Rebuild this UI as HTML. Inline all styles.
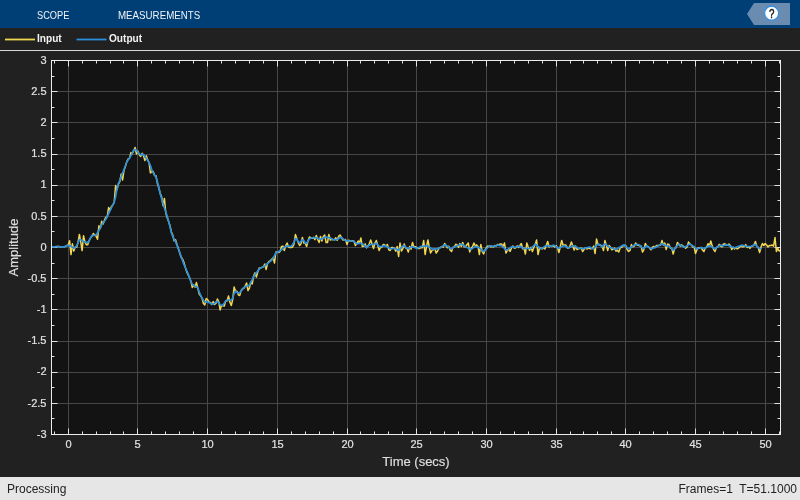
<!DOCTYPE html>
<html><head><meta charset="utf-8"><style>
html,body{margin:0;padding:0;width:800px;height:500px;overflow:hidden;background:#212121;font-family:"Liberation Sans",sans-serif}
.hdr{position:absolute;left:0;top:0;width:800px;height:28px;background:#003f76;will-change:transform}
.tab{position:absolute;top:9px;color:#f0f4f8;font-size:10.5px;transform-origin:0 0}
.leg{position:absolute;left:0;top:28px;width:800px;height:22px;will-change:transform;background:#212121;border-bottom:1.5px solid #d8d8d8}
.ll{position:absolute;top:10px;height:2px}
.lt{position:absolute;top:4px;color:#f2f2f2;font-size:11px;font-weight:bold;transform:scaleX(0.92);transform-origin:0 0}
.status{position:absolute;left:0;top:477px;width:800px;height:23px;background:#e6e6e6;color:#222;will-change:transform}
</style></head><body>
<div class="hdr">
 <div class="tab" style="left:37px;transform:scaleX(0.88)">SCOPE</div>
 <div class="tab" style="left:118px;transform:scaleX(0.927)">MEASUREMENTS</div>
 <svg style="position:absolute;left:0;top:0" width="800" height="28">
  <path d="M747 14L754 3H790V25H754Z" fill="#6a8cb0"/>
  <circle cx="771.6" cy="13.2" r="7" fill="#fff" stroke="#2f8ee0" stroke-width="1.2"/>
  <text transform="translate(771.8 17.6) scale(0.78 1)" text-anchor="middle" font-family="Liberation Sans" font-size="12.5" fill="#111" stroke="#111" stroke-width="0.45">?</text>
 </svg>
</div>
<div class="leg">
 <svg style="position:absolute;left:0;top:0" width="200" height="22"><path d="M5 11.5H35" stroke="#f0d653" stroke-width="1.8"/><path d="M76.5 11.5H106.5" stroke="#2b8fdc" stroke-width="1.8"/></svg>
 <div class="lt" style="left:37px">Input</div>
 <div class="lt" style="left:109px">Output</div>
</div>
<svg style="position:absolute;left:0;top:0;will-change:transform" width="800" height="476">
<defs><clipPath id="clip"><rect x="51.5" y="60.5" width="729.0" height="374.0"/></clipPath></defs><rect x="51.5" y="60.5" width="729.0" height="374.0" fill="#131313"/>
<path d="M68.5 60.5V434.5M137.5 60.5V434.5M207.5 60.5V434.5M277.5 60.5V434.5M347.5 60.5V434.5M416.5 60.5V434.5M486.5 60.5V434.5M556.5 60.5V434.5M625.5 60.5V434.5M695.5 60.5V434.5M765.5 60.5V434.5M51.5 403.5H780.5M51.5 372.5H780.5M51.5 341.5H780.5M51.5 309.5H780.5M51.5 278.5H780.5M51.5 247.5H780.5M51.5 216.5H780.5M51.5 185.5H780.5M51.5 154.5H780.5M51.5 122.5H780.5M51.5 91.5H780.5" stroke="#474747" stroke-width="1" fill="none"/>
<path d="M54.5 60.5v3M54.5 434.5v-3M68.5 60.5v6M68.5 434.5v-6M82.5 60.5v3M82.5 434.5v-3M96.5 60.5v3M96.5 434.5v-3M110.5 60.5v3M110.5 434.5v-3M123.5 60.5v3M123.5 434.5v-3M137.5 60.5v6M137.5 434.5v-6M151.5 60.5v3M151.5 434.5v-3M165.5 60.5v3M165.5 434.5v-3M179.5 60.5v3M179.5 434.5v-3M193.5 60.5v3M193.5 434.5v-3M207.5 60.5v6M207.5 434.5v-6M221.5 60.5v3M221.5 434.5v-3M235.5 60.5v3M235.5 434.5v-3M249.5 60.5v3M249.5 434.5v-3M263.5 60.5v3M263.5 434.5v-3M277.5 60.5v6M277.5 434.5v-6M291.5 60.5v3M291.5 434.5v-3M305.5 60.5v3M305.5 434.5v-3M319.5 60.5v3M319.5 434.5v-3M333.5 60.5v3M333.5 434.5v-3M347.5 60.5v6M347.5 434.5v-6M360.5 60.5v3M360.5 434.5v-3M374.5 60.5v3M374.5 434.5v-3M388.5 60.5v3M388.5 434.5v-3M402.5 60.5v3M402.5 434.5v-3M416.5 60.5v6M416.5 434.5v-6M430.5 60.5v3M430.5 434.5v-3M444.5 60.5v3M444.5 434.5v-3M458.5 60.5v3M458.5 434.5v-3M472.5 60.5v3M472.5 434.5v-3M486.5 60.5v6M486.5 434.5v-6M500.5 60.5v3M500.5 434.5v-3M514.5 60.5v3M514.5 434.5v-3M528.5 60.5v3M528.5 434.5v-3M542.5 60.5v3M542.5 434.5v-3M556.5 60.5v6M556.5 434.5v-6M570.5 60.5v3M570.5 434.5v-3M583.5 60.5v3M583.5 434.5v-3M597.5 60.5v3M597.5 434.5v-3M611.5 60.5v3M611.5 434.5v-3M625.5 60.5v6M625.5 434.5v-6M639.5 60.5v3M639.5 434.5v-3M653.5 60.5v3M653.5 434.5v-3M667.5 60.5v3M667.5 434.5v-3M681.5 60.5v3M681.5 434.5v-3M695.5 60.5v6M695.5 434.5v-6M709.5 60.5v3M709.5 434.5v-3M723.5 60.5v3M723.5 434.5v-3M737.5 60.5v3M737.5 434.5v-3M751.5 60.5v3M751.5 434.5v-3M765.5 60.5v6M765.5 434.5v-6M779.5 60.5v3M779.5 434.5v-3M51.5 418.5h3M780.5 418.5h-3M51.5 403.5h6M780.5 403.5h-6M51.5 387.5h3M780.5 387.5h-3M51.5 372.5h6M780.5 372.5h-6M51.5 356.5h3M780.5 356.5h-3M51.5 341.5h6M780.5 341.5h-6M51.5 325.5h3M780.5 325.5h-3M51.5 309.5h6M780.5 309.5h-6M51.5 294.5h3M780.5 294.5h-3M51.5 278.5h6M780.5 278.5h-6M51.5 263.5h3M780.5 263.5h-3M51.5 247.5h6M780.5 247.5h-6M51.5 231.5h3M780.5 231.5h-3M51.5 216.5h6M780.5 216.5h-6M51.5 200.5h3M780.5 200.5h-3M51.5 185.5h6M780.5 185.5h-6M51.5 169.5h3M780.5 169.5h-3M51.5 154.5h6M780.5 154.5h-6M51.5 138.5h3M780.5 138.5h-3M51.5 122.5h6M780.5 122.5h-6M51.5 107.5h3M780.5 107.5h-3M51.5 91.5h6M780.5 91.5h-6M51.5 76.5h3M780.5 76.5h-3" stroke="#e0e0e0" stroke-width="1" fill="none"/>
<g clip-path="url(#clip)" fill="none" stroke-linejoin="round" stroke-linecap="round"><path d="M51.5 247.0 52.9 246.9 54.3 246.8 55.7 246.7 57.0 246.6 58.4 246.5 59.8 246.7 61.2 246.9 62.6 247.2 64.0 247.1 65.4 246.3 66.8 245.6 68.2 245.0 69.6 240.7 71.0 254.6 72.4 243.8 73.8 251.0 75.2 246.9 76.6 247.2 78.0 242.6 79.4 234.4 80.7 241.5 82.1 250.6 83.5 235.7 84.9 241.9 86.3 244.7 87.7 244.8 89.1 240.6 90.5 237.8 91.9 236.5 93.3 233.5 94.7 234.9 96.1 236.1 97.5 239.3 98.9 225.8 100.3 228.5 101.7 221.3 103.1 224.0 104.4 220.4 105.8 217.3 107.2 216.9 108.6 207.5 110.0 210.3 111.4 206.5 112.8 205.0 114.2 202.4 115.6 185.5 117.0 189.6 118.4 184.0 119.8 181.6 121.2 174.0 122.6 180.0 124.0 170.2 125.4 166.5 126.7 161.9 128.1 159.0 129.5 158.4 130.9 152.6 132.3 153.7 133.7 150.7 135.1 147.5 136.5 154.0 137.9 151.2 139.3 154.7 140.7 156.5 142.1 153.3 143.5 155.5 144.9 160.5 146.3 155.8 147.7 159.9 149.1 163.0 150.4 173.0 151.8 171.8 153.2 171.6 154.6 175.5 156.0 175.8 157.4 183.4 158.8 187.6 160.2 193.2 161.6 196.7 163.0 205.6 164.4 198.4 165.8 213.0 167.2 217.7 168.6 221.6 170.0 225.7 171.4 232.0 172.8 235.4 174.1 240.7 175.5 239.7 176.9 244.3 178.3 248.3 179.7 252.8 181.1 257.2 182.5 259.0 183.9 262.3 185.3 267.4 186.7 271.9 188.1 274.7 189.5 277.7 190.9 281.2 192.3 287.5 193.7 285.0 195.1 287.2 196.4 282.5 197.8 288.1 199.2 294.0 200.6 295.8 202.0 298.1 203.4 303.5 204.8 305.0 206.2 298.5 207.6 299.5 209.0 302.1 210.4 302.5 211.8 304.5 213.2 301.6 214.6 304.5 216.0 303.2 217.4 299.0 218.8 301.8 220.1 310.0 221.5 305.4 222.9 305.8 224.3 306.0 225.7 300.9 227.1 300.9 228.5 296.0 229.9 302.1 231.3 305.5 232.7 299.6 234.1 287.0 235.5 291.1 236.9 291.2 238.3 294.8 239.7 295.5 241.1 290.6 242.5 288.6 243.8 288.4 245.2 285.8 246.6 283.0 248.0 290.5 249.4 288.1 250.8 282.1 252.2 284.0 253.6 276.0 255.0 272.9 256.4 277.0 257.8 271.9 259.2 268.0 260.6 268.2 262.0 267.4 263.4 266.9 264.8 264.0 266.1 269.5 267.5 263.6 268.9 261.5 270.3 260.8 271.7 259.2 273.1 257.8 274.5 263.0 275.9 252.0 277.3 251.9 278.7 252.6 280.1 251.5 281.5 246.5 282.9 246.1 284.3 250.5 285.7 245.8 287.1 243.0 288.5 247.1 289.8 247.6 291.2 247.5 292.6 247.0 294.0 244.1 295.4 234.5 296.8 238.6 298.2 242.7 299.6 245.5 301.0 243.8 302.4 237.5 303.8 243.1 305.2 243.0 306.6 246.5 308.0 241.1 309.4 237.0 310.8 237.6 312.2 238.3 313.5 237.5 314.9 239.7 316.3 235.5 317.7 239.5 319.1 242.5 320.5 236.5 321.9 241.0 323.3 236.6 324.7 235.0 326.1 242.5 327.5 242.5 328.9 234.5 330.3 240.1 331.7 239.2 333.1 239.8 334.5 239.6 335.8 237.8 337.2 240.3 338.6 236.4 340.0 235.0 341.4 237.4 342.8 239.9 344.2 239.7 345.6 239.6 347.0 244.5 348.4 240.3 349.8 240.8 351.2 241.1 352.6 240.8 354.0 241.2 355.4 245.5 356.8 243.6 358.2 241.0 359.5 243.0 360.9 238.0 362.3 246.5 363.7 246.3 365.1 243.8 366.5 247.7 367.9 246.1 369.3 243.8 370.7 240.0 372.1 243.9 373.5 248.5 374.9 243.2 376.3 240.5 377.7 245.0 379.1 250.5 380.5 247.5 381.9 247.2 383.2 244.6 384.6 244.8 386.0 246.0 387.4 244.5 388.8 249.8 390.2 250.5 391.6 247.6 393.0 247.6 394.4 248.1 395.8 251.3 397.2 246.5 398.6 256.5 400.0 243.0 401.4 251.0 402.8 248.9 404.2 244.0 405.5 247.7 406.9 248.3 408.3 252.0 409.7 246.5 411.1 249.2 412.5 242.5 413.9 247.3 415.3 246.7 416.7 247.5 418.1 248.6 419.5 248.4 420.9 247.5 422.3 247.7 423.7 240.5 425.1 254.5 426.5 246.6 427.9 240.0 429.2 246.9 430.6 253.0 432.0 250.4 433.4 249.7 434.8 248.8 436.2 253.0 437.6 251.0 439.0 248.2 440.4 247.5 441.8 246.5 443.2 247.2 444.6 243.5 446.0 245.7 447.4 247.7 448.8 246.3 450.2 250.2 451.6 251.5 452.9 247.2 454.3 247.2 455.7 244.3 457.1 244.9 458.5 247.4 459.9 243.6 461.3 246.4 462.7 242.5 464.1 246.8 465.5 246.7 466.9 244.8 468.3 243.0 469.7 252.0 471.1 248.1 472.5 246.8 473.9 243.0 475.2 245.8 476.6 244.9 478.0 246.4 479.4 254.5 480.8 244.5 482.2 251.5 483.6 254.0 485.0 250.1 486.4 247.5 487.8 246.0 489.2 246.2 490.6 246.7 492.0 246.4 493.4 247.1 494.8 245.5 496.2 246.0 497.6 244.6 498.9 244.8 500.3 244.0 501.7 244.0 503.1 246.5 504.5 243.0 505.9 253.0 507.3 250.7 508.7 248.8 510.1 251.4 511.5 248.0 512.9 246.0 514.3 248.2 515.7 247.7 517.1 245.9 518.5 247.5 519.9 245.5 521.3 243.5 522.6 248.8 524.0 247.8 525.4 254.0 526.8 243.0 528.2 247.1 529.6 250.4 531.0 247.2 532.4 251.5 533.8 247.4 535.2 244.4 536.6 240.0 538.0 254.5 539.4 248.5 540.8 247.8 542.2 248.9 543.6 247.9 544.9 249.0 546.3 245.2 547.7 241.5 549.1 247.0 550.5 245.9 551.9 246.4 553.3 245.5 554.7 247.0 556.1 245.8 557.5 247.6 558.9 252.5 560.3 246.5 561.7 240.5 563.1 245.2 564.5 244.9 565.9 245.1 567.3 248.0 568.6 248.1 570.0 245.8 571.4 242.0 572.8 246.1 574.2 250.0 575.6 245.9 577.0 249.5 578.4 248.7 579.8 248.4 581.2 247.9 582.6 251.5 584.0 249.5 585.4 247.8 586.8 249.0 588.2 248.1 589.6 248.6 591.0 248.8 592.3 248.5 593.7 246.0 595.1 253.5 596.5 239.0 597.9 244.3 599.3 245.0 600.7 245.1 602.1 246.4 603.5 250.5 604.9 240.5 606.3 245.1 607.7 250.5 609.1 245.4 610.5 247.3 611.9 249.8 613.3 249.1 614.6 248.1 616.0 251.2 617.4 250.3 618.8 252.0 620.2 247.8 621.6 247.4 623.0 245.8 624.4 245.8 625.8 245.4 627.2 249.5 628.6 251.5 630.0 250.4 631.4 244.6 632.8 246.9 634.2 246.3 635.6 243.0 637.0 245.0 638.3 245.4 639.7 245.9 641.1 246.0 642.5 252.0 643.9 249.7 645.3 243.5 646.7 245.8 648.1 246.7 649.5 247.8 650.9 249.8 652.3 247.4 653.7 246.4 655.1 247.5 656.5 245.4 657.9 245.4 659.3 245.4 660.7 245.1 662.0 240.5 663.4 245.1 664.8 243.0 666.2 249.5 667.6 244.1 669.0 244.5 670.4 248.2 671.8 248.3 673.2 254.0 674.6 248.5 676.0 247.8 677.4 242.5 678.8 244.1 680.2 246.2 681.6 244.9 683.0 246.0 684.3 246.8 685.7 248.1 687.1 247.0 688.5 242.0 689.9 244.0 691.3 244.8 692.7 247.0 694.1 246.5 695.5 253.5 696.9 249.8 698.3 247.7 699.7 247.9 701.1 247.4 702.5 250.1 703.9 251.6 705.3 247.8 706.7 247.2 708.0 243.7 709.4 246.0 710.8 241.0 712.2 245.9 713.6 249.3 715.0 251.5 716.4 247.5 717.8 247.0 719.2 244.4 720.6 246.1 722.0 246.9 723.4 244.2 724.8 243.6 726.2 245.4 727.6 244.9 729.0 244.1 730.4 245.8 731.7 249.5 733.1 247.2 734.5 249.0 735.9 247.9 737.3 249.0 738.7 248.0 740.1 246.6 741.5 246.5 742.9 246.9 744.3 246.5 745.7 244.6 747.1 247.5 748.5 246.6 749.9 248.4 751.3 246.4 752.7 246.1 754.0 245.0 755.4 241.5 756.8 246.3 758.2 247.3 759.6 252.5 761.0 247.0 762.4 243.5 763.8 245.5 765.2 243.5 766.6 245.0 768.0 247.0 769.4 245.5 770.8 245.5 772.2 245.0 773.6 246.1 775.0 237.5 776.4 251.5 777.7 248.2 779.1 251.0 780.5 250.5" stroke="#f0d653" stroke-width="1.5"/><path d="M51.5 247.0 52.9 246.9 54.3 246.8 55.7 246.7 57.0 246.6 58.4 246.5 59.8 246.7 61.2 246.9 62.6 247.2 64.0 247.1 65.4 246.3 66.8 245.6 68.2 245.4 69.6 245.7 71.0 246.2 72.4 247.2 73.8 248.2 75.2 247.2 76.6 246.0 78.0 242.9 79.4 239.7 80.7 239.6 82.1 240.6 83.5 241.5 84.9 242.1 86.3 242.3 87.7 242.4 89.1 240.9 90.5 238.1 91.9 235.3 93.3 235.3 94.7 235.3 96.1 235.0 97.5 232.8 98.9 230.5 100.3 227.6 101.7 224.7 103.1 222.8 104.4 221.2 105.8 219.3 107.2 216.5 108.6 213.7 110.0 210.8 111.4 207.8 112.8 204.9 114.2 202.4 115.6 196.8 117.0 188.7 118.4 183.8 119.8 180.3 121.2 176.7 122.6 173.1 124.0 169.5 125.4 165.8 126.7 162.2 128.1 160.0 129.5 158.1 130.9 155.6 132.3 152.9 133.7 150.1 135.1 149.5 136.5 150.3 137.9 152.4 139.3 153.8 140.7 154.9 142.1 154.4 143.5 154.6 144.9 156.5 146.3 158.4 147.7 160.5 149.1 162.6 150.4 165.4 151.8 169.9 153.2 173.0 154.6 175.0 156.0 177.1 157.4 181.7 158.8 187.7 160.2 193.7 161.6 198.8 163.0 203.5 164.4 208.0 165.8 212.1 167.2 216.3 168.6 221.2 170.0 226.5 171.4 233.0 172.8 236.4 174.1 239.1 175.5 241.5 176.9 245.1 178.3 248.7 179.7 252.6 181.1 256.5 182.5 260.5 183.9 264.4 185.3 267.4 186.7 270.5 188.1 273.8 189.5 277.4 190.9 281.6 192.3 284.1 193.7 285.3 195.1 286.2 196.4 286.6 197.8 288.0 199.2 291.9 200.6 295.2 202.0 297.8 203.4 300.4 204.8 301.6 206.2 301.8 207.6 302.0 209.0 302.5 210.4 303.2 211.8 303.9 213.2 304.3 214.6 303.1 216.0 301.9 217.4 301.4 218.8 303.0 220.1 304.5 221.5 305.4 222.9 305.0 224.3 303.1 225.7 301.1 227.1 300.0 228.5 300.0 229.9 300.0 231.3 300.0 232.7 297.9 234.1 293.7 235.5 291.3 236.9 292.2 238.3 293.0 239.7 292.7 241.1 290.9 242.5 289.2 243.8 287.8 245.2 286.6 246.6 286.0 248.0 286.0 249.4 285.2 250.8 282.4 252.2 279.6 253.6 276.8 255.0 274.5 256.4 272.7 257.8 270.9 259.2 269.1 260.6 267.8 262.0 267.3 263.4 266.7 264.8 265.9 266.1 264.7 267.5 263.5 268.9 262.4 270.3 261.4 271.7 260.2 273.1 258.2 274.5 255.8 275.9 252.7 277.3 252.1 278.7 251.6 280.1 250.8 281.5 249.8 282.9 248.6 284.3 247.2 285.7 246.4 287.1 246.2 288.5 246.1 289.8 246.3 291.2 246.2 292.6 244.5 294.0 242.1 295.4 238.5 296.8 238.8 298.2 241.8 299.6 242.8 301.0 241.3 302.4 239.7 303.8 240.4 305.2 243.0 306.6 243.4 308.0 240.9 309.4 238.9 310.8 238.3 312.2 237.8 313.5 237.6 314.9 237.7 316.3 237.9 317.7 238.3 319.1 238.8 320.5 239.3 321.9 238.9 323.3 238.1 324.7 237.2 326.1 237.1 327.5 237.3 328.9 237.5 330.3 238.1 331.7 238.8 333.1 239.5 334.5 239.9 335.8 239.7 337.2 239.3 338.6 238.5 340.0 237.6 341.4 237.4 342.8 238.6 344.2 239.8 345.6 240.6 347.0 240.8 348.4 240.9 349.8 241.0 351.2 241.0 352.6 241.0 354.0 241.4 355.4 242.6 356.8 243.8 358.2 243.6 359.5 243.2 360.9 243.3 362.3 243.8 363.7 244.7 365.1 246.1 366.5 247.5 367.9 246.3 369.3 245.1 370.7 244.5 372.1 244.5 373.5 244.3 374.9 243.6 376.3 243.3 377.7 244.9 379.1 246.5 380.5 246.7 381.9 246.4 383.2 246.0 384.6 245.6 386.0 246.1 387.4 246.9 388.8 247.7 390.2 248.5 391.6 248.8 393.0 248.5 394.4 248.2 395.8 248.6 397.2 249.6 398.6 250.4 400.0 248.8 401.4 247.2 402.8 246.1 404.2 245.6 405.5 246.9 406.9 248.1 408.3 248.8 409.7 247.9 411.1 247.0 412.5 246.7 413.9 247.3 415.3 247.8 416.7 248.4 418.1 248.0 419.5 247.3 420.9 246.6 422.3 246.3 423.7 246.1 425.1 245.8 426.5 245.6 427.9 246.1 429.2 247.0 430.6 247.9 432.0 248.9 433.4 249.4 434.8 249.2 436.2 249.0 437.6 248.7 439.0 248.5 440.4 247.6 441.8 246.6 443.2 245.7 444.6 244.8 446.0 245.2 447.4 246.3 448.8 247.3 450.2 248.4 451.6 248.7 452.9 247.8 454.3 247.0 455.7 246.2 457.1 245.6 458.5 245.2 459.9 244.7 461.3 244.2 462.7 244.5 464.1 245.6 465.5 246.6 466.9 247.4 468.3 248.1 469.7 248.8 471.1 249.5 472.5 248.4 473.9 247.4 475.2 246.6 476.6 246.9 478.0 247.3 479.4 247.9 480.8 249.1 482.2 250.4 483.6 251.4 485.0 250.1 486.4 248.8 487.8 247.5 489.2 246.2 490.6 245.7 492.0 246.1 493.4 246.5 494.8 246.1 496.2 245.6 497.6 245.1 498.9 245.2 500.3 245.6 501.7 245.9 503.1 247.1 504.5 248.5 505.9 249.9 507.3 249.9 508.7 248.9 510.1 247.9 511.5 246.9 512.9 246.8 514.3 247.3 515.7 247.2 517.1 246.7 518.5 246.2 519.9 246.4 521.3 247.1 522.6 247.8 524.0 248.5 525.4 248.5 526.8 248.5 528.2 248.5 529.6 248.5 531.0 248.5 532.4 247.1 533.8 245.7 535.2 244.3 536.6 245.0 538.0 246.3 539.4 247.5 540.8 248.8 542.2 248.2 543.6 247.2 544.9 246.2 546.3 245.6 547.7 245.8 549.1 246.1 550.5 246.4 551.9 246.0 553.3 245.3 554.7 245.5 556.1 246.6 557.5 247.7 558.9 248.3 560.3 247.5 561.7 246.8 563.1 246.0 564.5 245.8 565.9 246.5 567.3 247.3 568.6 247.9 570.0 247.2 571.4 246.5 572.8 245.8 574.2 245.9 575.6 246.7 577.0 247.4 578.4 248.2 579.8 248.5 581.2 248.5 582.6 248.5 584.0 248.5 585.4 248.1 586.8 247.7 588.2 247.4 589.6 247.0 591.0 247.8 592.3 248.6 593.7 248.3 595.1 246.9 596.5 245.5 597.9 244.1 599.3 244.3 600.7 245.7 602.1 246.9 603.5 244.9 604.9 243.8 606.3 244.9 607.7 246.0 609.1 247.0 610.5 247.5 611.9 248.0 613.3 248.5 614.6 249.0 616.0 249.5 617.4 248.6 618.8 247.7 620.2 246.9 621.6 246.0 623.0 245.1 624.4 244.9 625.8 246.3 627.2 247.7 628.6 248.9 630.0 248.0 631.4 247.0 632.8 246.0 634.2 245.1 635.6 244.5 637.0 244.5 638.3 244.5 639.7 245.2 641.1 246.6 642.5 248.0 643.9 248.5 645.3 246.9 646.7 245.6 648.1 246.6 649.5 247.6 650.9 248.6 652.3 248.6 653.7 248.0 655.1 247.4 656.5 246.7 657.9 246.1 659.3 245.3 660.7 244.5 662.0 243.8 663.4 244.2 664.8 245.2 666.2 246.0 667.6 246.0 669.0 246.0 670.4 247.4 671.8 248.8 673.2 250.2 674.6 249.1 676.0 247.3 677.4 245.5 678.8 244.2 680.2 245.0 681.6 245.8 683.0 246.6 684.3 247.4 685.7 246.7 687.1 245.8 688.5 244.9 689.9 244.0 691.3 244.9 692.7 245.9 694.1 246.9 695.5 247.9 696.9 248.9 698.3 248.5 699.7 248.0 701.1 247.5 702.5 248.0 703.9 248.5 705.3 247.9 706.7 247.2 708.0 246.5 709.4 245.8 710.8 246.1 712.2 247.2 713.6 248.3 715.0 248.7 716.4 247.7 717.8 246.8 719.2 245.9 720.6 245.0 722.0 245.6 723.4 245.8 724.8 245.2 726.2 244.6 727.6 245.0 729.0 245.6 730.4 246.2 731.7 246.8 733.1 247.4 734.5 248.0 735.9 247.4 737.3 246.9 738.7 246.3 740.1 245.8 741.5 245.2 742.9 245.3 744.3 245.7 745.7 246.1 747.1 246.5 748.5 246.5 749.9 246.5 751.3 246.3 752.7 245.5 754.0 244.6 755.4 244.5 756.8 246.1 758.2 247.6 759.6 248.5 761.0 248.5" stroke="#2b8fdc" stroke-width="1.7"/></g>
<rect x="51.5" y="60.5" width="729.0" height="374.0" fill="none" stroke="#ececec" stroke-width="1"/>
<g font-family="Liberation Sans" font-size="11" fill="#e2e2e2" stroke="#e2e2e2" stroke-width="0.2"><text x="68.6" y="448" text-anchor="middle">0</text><text x="137.6" y="448" text-anchor="middle">5</text><text x="207.6" y="448" text-anchor="middle">10</text><text x="277.6" y="448" text-anchor="middle">15</text><text x="347.6" y="448" text-anchor="middle">20</text><text x="416.6" y="448" text-anchor="middle">25</text><text x="486.6" y="448" text-anchor="middle">30</text><text x="556.6" y="448" text-anchor="middle">35</text><text x="625.6" y="448" text-anchor="middle">40</text><text x="695.6" y="448" text-anchor="middle">45</text><text x="765.6" y="448" text-anchor="middle">50</text><text x="46.5" y="437.7" text-anchor="end">-3</text><text x="46.5" y="406.5" text-anchor="end">-2.5</text><text x="46.5" y="375.4" text-anchor="end">-2</text><text x="46.5" y="344.2" text-anchor="end">-1.5</text><text x="46.5" y="313.0" text-anchor="end">-1</text><text x="46.5" y="281.9" text-anchor="end">-0.5</text><text x="46.5" y="250.7" text-anchor="end">0</text><text x="46.5" y="219.5" text-anchor="end">0.5</text><text x="46.5" y="188.4" text-anchor="end">1</text><text x="46.5" y="157.2" text-anchor="end">1.5</text><text x="46.5" y="126.0" text-anchor="end">2</text><text x="46.5" y="94.9" text-anchor="end">2.5</text><text x="46.5" y="63.7" text-anchor="end">3</text></g>
<text x="416" y="466" text-anchor="middle" font-family="Liberation Sans" font-size="13" fill="#dedede" stroke="#dedede" stroke-width="0.2">Time (secs)</text>
<text transform="translate(17.8 247.5) rotate(-90)" text-anchor="middle" font-family="Liberation Sans" font-size="13" fill="#dedede" stroke="#dedede" stroke-width="0.2">Amplitude</text>
</svg>
<div class="status">
 <div style="position:absolute;left:7px;top:5px;font-size:12px">Processing</div>
 <div style="position:absolute;right:3px;top:5px;font-size:12px;white-space:pre">Frames=1  T=51.1000</div>
</div>
</body></html>
